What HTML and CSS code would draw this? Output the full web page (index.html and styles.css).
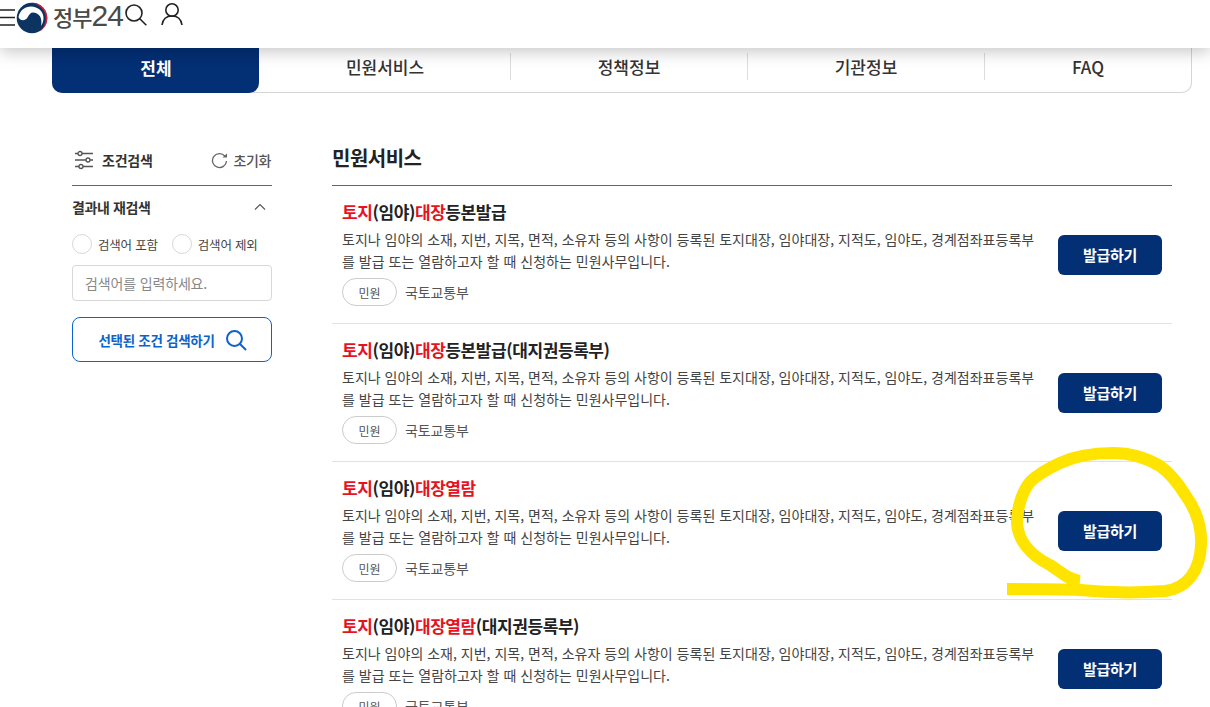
FILE: index.html
```html
<!DOCTYPE html>
<html lang="ko">
<head>
<meta charset="utf-8">
<title>정부24</title>
<link rel="stylesheet" href="styles.css">
</head>
<body>
<header class="topbar">
  <svg class="ico-menu" width="15" height="22" viewBox="0 0 15 22"><path d="M0 3h15M0 10.500h15M0 18h15" stroke="#222" stroke-width="1.500" fill="none"/></svg>
  <svg class="logo" width="32" height="32" viewBox="0 0 32 32">
    <circle cx="16" cy="16" r="15.300" fill="#0b3460"/>
    <path d="M2.500 15C4 8 9 4.500 15 4.500c7 0 12.500 5 12.500 11.500 0 3-1 6-2.500 8 .5-2.500.5-5 0-7-.5-3.500-4-6.500-8-6.500-2.500 0-4 2-5.500 5C9 19.500 4 19 2.500 15Z" fill="#fff"/>
    <path d="M16 .8C24.500.8 31.300 7.500 31.300 16c0 5.500-2.800 10.500-7.300 13.300 3.800-3.300 5.800-8 5.800-13.300C29.800 8.500 23.500 2.200 16 .8Z" fill="#d8203f"/>
  </svg>
  <span class="brand">정부<b class="brand-num">24</b></span>
  <svg class="ico-search" width="24" height="24" viewBox="0 0 24 24"><circle cx="10" cy="10" r="8" stroke="#222" stroke-width="1.600" fill="none"/><path d="M15.800 15.800l6.500 6.500" stroke="#222" stroke-width="1.600" fill="none"/></svg>
  <svg class="ico-user" width="22" height="24" viewBox="0 0 22 24"><circle cx="11" cy="8" r="6.200" stroke="#222" stroke-width="1.600" fill="none"/><path d="M1 23c.8-5.500 4.500-9 10-9s9.200 3.500 10 9" stroke="#222" stroke-width="1.600" fill="none"/></svg>
</header>

<nav class="tabs">
  <a class="tab tab-active">전체</a>
  <a class="tab tab-second">민원서비스</a>
  <a class="tab tab-sep">정책정보</a>
  <a class="tab tab-sep">기관정보</a>
  <a class="tab tab-sep tab-last">FAQ</a>
</nav>

<main class="layout">
  <aside class="side">
    <div class="side-head">
      <svg class="ico-filter" width="20" height="20" viewBox="0 0 20 20" fill="none" stroke="#555" stroke-width="1.300">
        <path d="M1 3.500h18M1 10h18M1 16.500h18"/>
        <circle cx="6" cy="3.500" r="2" fill="#fff"/><circle cx="14" cy="10" r="2" fill="#fff"/><circle cx="7" cy="16.500" r="2" fill="#fff"/>
      </svg>
      <strong class="side-title">조건검색</strong>
      <svg class="ico-reset" width="17" height="17" viewBox="0 0 17 17" fill="none"><path d="M13.800 4A7 7 0 1 0 15.500 9" stroke="#666" stroke-width="1.300"/><path d="M11.500 5.500h4.500V1.500z" fill="#666"/></svg>
      <span class="reset">초기화</span>
    </div>
    <div class="filter-head">
      <strong>결과내 재검색</strong>
      <svg width="12" height="7" viewBox="0 0 12 7" fill="none"><path d="M1 6.500l5-5 5 5" stroke="#555" stroke-width="1.100"/></svg>
    </div>
    <div class="radios">
      <label class="radio"><i class="dot"></i>검색어 포함</label>
      <label class="radio"><i class="dot"></i>검색어 제외</label>
    </div>
    <div class="input">검색어를 입력하세요.</div>
    <button class="search-btn">선택된 조건 검색하기
      <svg width="22" height="22" viewBox="0 0 22 22" fill="none" stroke="#0b63ce" stroke-width="2"><circle cx="9.500" cy="9.500" r="7.500"/><path d="M15 15l6 6"/></svg>
    </button>
  </aside>

  <section class="results">
    <h2 class="results-title">민원서비스</h2>

    <article class="item">
      <div class="item-body">
        <h3 class="item-title"><em>토지</em>(임야)<em>대장</em>등본발급</h3>
        <p class="item-desc">토지나 임야의 소재, 지번, 지목, 면적, 소유자 등의 사항이 등록된 토지대장, 임야대장, 지적도, 임야도, 경계점좌표등록부를 발급 또는 열람하고자 할 때 신청하는 민원사무입니다.</p>
        <div class="meta"><span class="pill">민원</span><span class="org">국토교통부</span></div>
      </div>
      <button class="issue">발급하기</button>
    </article>

    <article class="item">
      <div class="item-body">
        <h3 class="item-title"><em>토지</em>(임야)<em>대장</em>등본발급(대지권등록부)</h3>
        <p class="item-desc">토지나 임야의 소재, 지번, 지목, 면적, 소유자 등의 사항이 등록된 토지대장, 임야대장, 지적도, 임야도, 경계점좌표등록부를 발급 또는 열람하고자 할 때 신청하는 민원사무입니다.</p>
        <div class="meta"><span class="pill">민원</span><span class="org">국토교통부</span></div>
      </div>
      <button class="issue">발급하기</button>
    </article>

    <article class="item">
      <div class="item-body">
        <h3 class="item-title"><em>토지</em>(임야)<em>대장열람</em></h3>
        <p class="item-desc">토지나 임야의 소재, 지번, 지목, 면적, 소유자 등의 사항이 등록된 토지대장, 임야대장, 지적도, 임야도, 경계점좌표등록부를 발급 또는 열람하고자 할 때 신청하는 민원사무입니다.</p>
        <div class="meta"><span class="pill">민원</span><span class="org">국토교통부</span></div>
      </div>
      <button class="issue">발급하기</button>
    </article>

    <article class="item">
      <div class="item-body">
        <h3 class="item-title"><em>토지</em>(임야)<em>대장열람</em>(대지권등록부)</h3>
        <p class="item-desc">토지나 임야의 소재, 지번, 지목, 면적, 소유자 등의 사항이 등록된 토지대장, 임야대장, 지적도, 임야도, 경계점좌표등록부를 발급 또는 열람하고자 할 때 신청하는 민원사무입니다.</p>
        <div class="meta"><span class="pill">민원</span><span class="org">국토교통부</span></div>
      </div>
      <button class="issue">발급하기</button>
    </article>
  </section>
</main>

<svg class="scribble" width="1210" height="707" viewBox="0 0 1210 707" fill="none">
  <path d="M1007 589C1040 589 1060 589 1080 590C1110 593 1140 593 1165 591C1188 588 1200 570 1201 545C1202 525 1196 510 1186 496C1178 483 1170 473 1160 466C1145 457 1130 453 1113 453C1095 453 1075 456 1060 463C1047 469 1038 474 1030 482C1022 492 1017 508 1017 523C1018 540 1030 555 1050 565C1060 571 1068 580 1080 581" stroke="#ffe400" stroke-width="12"/>
</svg>
</body>
</html>
```
FILE: styles.css
```css
* { box-sizing: border-box; }
html, body { margin: 0; padding: 0; height: 707px; overflow: hidden; background: #fff; }
body { font-family: "Noto Sans CJK KR", "Noto Sans", sans-serif; color: #222; position: relative; }

.topbar {
  height: 48px;
  display: flex;
  align-items: flex-start;
  background: #fff;
  box-shadow: 0 4px 16px rgba(0, 0, 0, .22);
  position: relative;
  z-index: 2;
}
.ico-menu { margin-top: 7px; flex: none; }
.logo { margin: 2px 0 0 1px; flex: none; }
.brand { margin-left: 5px; font-size: 22px; line-height: 32px; color: #4a4a4a; font-weight: 500; letter-spacing: -1px; white-space: nowrap; }
.brand-num { font-family: "Liberation Sans", sans-serif; font-weight: 400; font-size: 30px; letter-spacing: -1px; }
.ico-search { margin: 3px 0 0 1px; flex: none; }
.ico-user { margin: 2px 0 0 13px; flex: none; }

.tabs {
  display: flex;
  margin: 0 18px 0 52px;
  height: 45px;
  border: 1px solid #d5d5d5;
  border-top: 0;
  border-radius: 0 0 10px 10px;
}
.tab {
  flex: 0 0 237px;
  display: flex;
  align-items: center;
  justify-content: center;
  font-size: 17px;
  font-weight: 500;
  color: #333;
  padding: 0 0 7px 1px;
  position: relative;
}
.tab-active {
  flex: 0 0 207px;
  margin: 0 0 -1px -1px;
  background: #032f74;
  color: #fff;
  font-weight: 700;
  border-radius: 0 0 10px 10px;
}
.tab-second { flex-basis: 251px; }
.tab-last { flex: 1 0 0; }
.tab-sep::before {
  content: "";
  position: absolute;
  left: 0;
  top: 5px;
  height: 27px;
  width: 1px;
  background: #ddd;
}

.layout {
  display: flex;
  padding: 52px 38px 0 72px;
}
.side { flex: 0 0 200px; }
.side-head {
  display: flex;
  align-items: center;
  height: 41px;
  padding: 0 1px 10px 2px;
  border-bottom: 1px solid #666;
}
.ico-filter { flex: none; margin-right: 8px; }
.side-title { font-size: 14px; font-weight: 700; color: #333; letter-spacing: -.2px; }
.ico-reset { flex: none; margin-left: auto; margin-right: 6px; }
.reset { font-size: 14px; font-weight: 500; color: #555; letter-spacing: -.4px; }

.filter-head {
  display: flex;
  justify-content: space-between;
  align-items: center;
  height: 41px;
  padding: 0 6px 0 0;
  font-size: 14px;
  letter-spacing: -.4px;
  color: #333;
}
.filter-head strong { font-weight: 700; }
.radios { display: flex; gap: 14px; margin-top: 7px; }
.radio { display: flex; align-items: center; gap: 6px; font-size: 12.5px; color: #444; letter-spacing: -.2px; }
.dot { width: 20px; height: 20px; border: 1px solid #d8d8d8; border-radius: 50%; flex: none; }
.input {
  margin-top: 11px;
  height: 36px;
  border: 1px solid #d8d8d8;
  border-radius: 4px;
  padding: 0 12px;
  font-size: 14px;
  line-height: 34px;
  color: #888;
  letter-spacing: -.15px;
}
.search-btn {
  margin-top: 16px;
  width: 200px;
  height: 45px;
  display: flex;
  align-items: center;
  justify-content: center;
  gap: 10px;
  background: #fff;
  border: 1px solid #0b63ce;
  border-radius: 8px;
  color: #0b63ce;
  font-family: inherit;
  font-size: 13.5px;
  font-weight: 700;
  letter-spacing: -.3px;
  padding: 0 0 0 1px;
}

.results { flex: 0 0 840px; margin-left: 60px; }
.results-title {
  margin: -2px 0 0;
  height: 43px;
  font-size: 20px;
  line-height: 30px;
  font-weight: 700;
  color: #222;
  border-bottom: 1px solid #666;
  letter-spacing: -.5px;
}
.item {
  display: flex;
  align-items: center;
  height: 138px;
  padding: 0 10px;
  border-bottom: 1px solid #e2e2e2;
}
.item-body { flex: 0 0 696px; align-self: flex-start; margin-top: 14px; }
.item-title {
  margin: 0;
  font-size: 17px;
  line-height: 24px;
  font-weight: 700;
  color: #222;
  letter-spacing: -.42px;
}
.item-title em { font-style: normal; color: #e8121e; }
.item-desc {
  margin: 4px 0 0;
  font-size: 14px;
  line-height: 22px;
  color: #444;
  letter-spacing: .01px;
}
.meta { display: flex; align-items: center; gap: 8px; margin-top: 6px; }
.pill {
  width: 55px;
  height: 28px;
  border: 1px solid #ccc;
  border-radius: 14px;
  display: flex;
  align-items: center;
  justify-content: center;
  font-size: 12px;
  color: #555;
}
.org { font-size: 14px; color: #555; letter-spacing: -.1px; }
.issue {
  margin-left: auto;
  width: 104px;
  height: 40px;
  border: 0;
  border-radius: 6px;
  background: #032f74;
  color: #fff;
  font-family: inherit;
  font-size: 15px;
  font-weight: 700;
  letter-spacing: -.3px;
}
.scribble { position: absolute; left: 0; top: 0; pointer-events: none; z-index: 3; }
```
